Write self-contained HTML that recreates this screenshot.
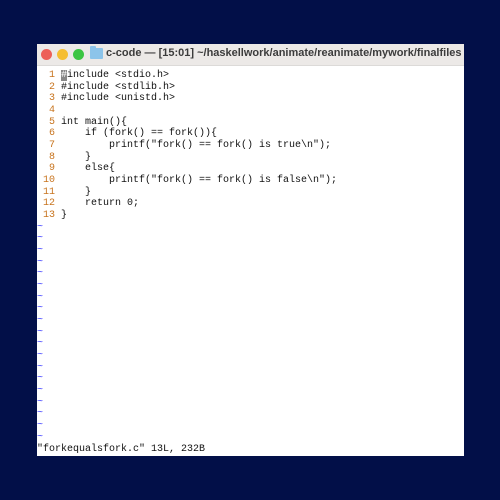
<!DOCTYPE html>
<html><head><style>
html,body{margin:0;padding:0;}
body{width:500px;height:500px;background:#020f48;position:relative;overflow:hidden;}
.win{position:absolute;left:37px;top:44px;width:427px;height:412px;background:#fff;overflow:hidden;}
.tb{position:absolute;left:0;top:0;width:427px;height:21px;background:#ece9e7;border-bottom:1px solid #dcdad8;}
.dot{position:absolute;top:5px;width:11px;height:11px;border-radius:50%;}
.title{position:absolute;left:69px;top:3px;font:bold 11px "Liberation Sans",sans-serif;color:#3c3c3c;white-space:nowrap;}
.folder{position:absolute;left:53px;top:4px;width:13px;height:11px;background:#8cc4ea;border-radius:1px;}
.folder:before{content:"";position:absolute;left:0;top:-2px;width:6px;height:3px;background:#8cc4ea;border-radius:1px 1px 0 0;}
pre{position:absolute;left:0;top:26px;margin:0;font:10px/11.67px "Liberation Mono",monospace;color:#111;}
.n{color:#c8741e;}
.t{color:#3a3aff;}
.cur{background:#888;color:#fff;}
</style></head><body>
<div class="win">
<div class="tb">
<div class="dot" style="left:4px;background:#ed5f58"></div>
<div class="dot" style="left:20px;background:#f5be31"></div>
<div class="dot" style="left:36px;background:#3bc542"></div>
<div class="folder"></div>
<div class="title">c-code — [15:01] ~/haskellwork/animate/reanimate/mywork/finalfiles</div>
</div>
<pre><span class="n">  1 </span><span class="cur">#</span>include &lt;stdio.h&gt;
<span class="n">  2 </span>#include &lt;stdlib.h&gt;
<span class="n">  3 </span>#include &lt;unistd.h&gt;
<span class="n">  4 </span>
<span class="n">  5 </span>int main(){
<span class="n">  6 </span>    if (fork() == fork()){
<span class="n">  7 </span>        printf("fork() == fork() is true\n");
<span class="n">  8 </span>    }
<span class="n">  9 </span>    else{
<span class="n"> 10 </span>        printf("fork() == fork() is false\n");
<span class="n"> 11 </span>    }
<span class="n"> 12 </span>    return 0;
<span class="n"> 13 </span>}
<span class="t">~
~
~
~
~
~
~
~
~
~
~
~
~
~
~
~
~
~
~</span>
"forkequalsfork.c" 13L, 232B</pre>
</div>
</body></html>
